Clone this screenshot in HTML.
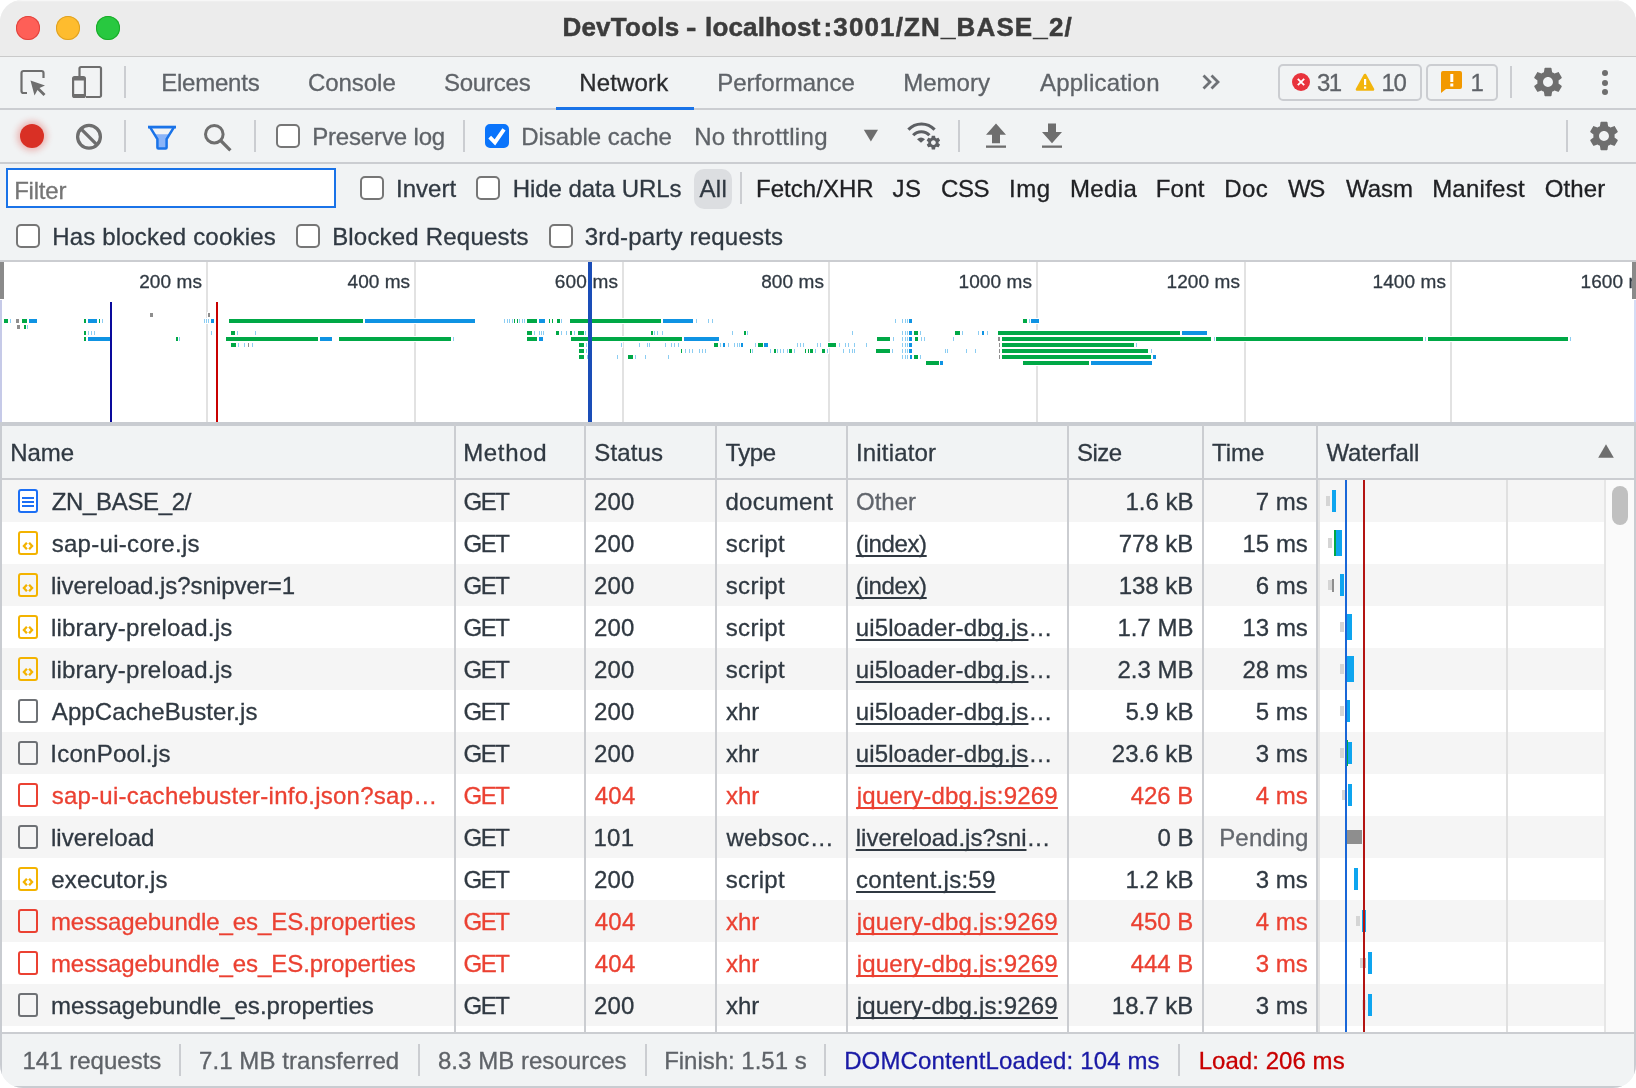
<!DOCTYPE html>
<html lang="en"><head><meta charset="utf-8"><title>DevTools - localhost:3001/ZN_BASE_2/</title>
<style>
html,body{margin:0;padding:0;background:#fff;}
body{width:1636px;height:1088px;overflow:hidden;position:relative;font-family:"Liberation Sans",sans-serif;font-size:24px;line-height:24px;}
#win{will-change:transform;position:absolute;left:0;top:0;width:1636px;height:1088px;border-radius:22px 22px 23px 23px;overflow:hidden;background:#f1f3f4;}
.t{position:absolute;white-space:nowrap;-webkit-text-stroke:0.3px currentColor;}
.r{position:absolute;}
svg{position:absolute;overflow:visible;}
.cb{position:absolute;width:20px;height:20px;border:2px solid #767676;border-radius:5px;background:#fff;}
</style></head><body><div id="win">

<div class="r" style="left:0px;top:0px;width:1636px;height:56px;background:#ececec;"></div>
<div class="r" style="left:0px;top:0px;width:1636px;height:1px;background:#f7f7f7;"></div>
<div class="r" style="left:0px;top:1px;width:1636px;height:1px;background:#efefef;"></div>
<div class="r" style="left:0px;top:56px;width:1636px;height:1px;background:#cacaca;"></div>
<div class="r" style="left:16px;top:16px;width:24px;height:24px;border-radius:50%;background:#fe5f57;box-shadow:inset 0 0 0 1px #e0443e;"></div>
<div class="r" style="left:56px;top:16px;width:24px;height:24px;border-radius:50%;background:#febc2e;box-shadow:inset 0 0 0 1px #dea123;"></div>
<div class="r" style="left:96px;top:16px;width:24px;height:24px;border-radius:50%;background:#28c840;box-shadow:inset 0 0 0 1px #1aab29;"></div>
<span class="t" style="left:562.40px;top:13.99px;color:#3c3c3c;font-size:26px;line-height:26px;font-weight:bold;-webkit-text-stroke-width:0.5px;"><span style="letter-spacing:0.249px;">DevTools</span> <span style="display:inline-block;margin-left:-0.40px;transform:scaleX(1.2);transform-origin:0 0;">-</span> <span style="letter-spacing:0.150px;margin-left:2.80px;">localhost</span><span style="letter-spacing:1.134px;margin-left:3.00px;">:3001/ZN_BASE_2/</span></span>
<div class="r" style="left:0px;top:57px;width:1636px;height:51px;background:#f1f3f4;"></div>
<div class="r" style="left:0px;top:108px;width:1636px;height:2px;background:#cbcdd1;"></div>
<svg style="left:18px;top:66px" width="32" height="32" viewBox="0 0 32 32"><path d="M9 27H5.5A2 2 0 0 1 3.500 25V7A2 2 0 0 1 5.500 5H23.500A2 2 0 0 1 25.500 7V12" fill="none" stroke="#6e6e6e" stroke-width="2.200"/><path d="M12.500 14.500L27 19.500L21.500 22L27.500 28L25.500 30L19.500 24L16.500 29.500Z" fill="#6e6e6e"/></svg>
<svg style="left:70px;top:64px" width="34" height="36" viewBox="0 0 34 36"><path d="M9.5 13V4.500A1.500 1.500 0 0 1 11 3H29.500A1.500 1.500 0 0 1 31 4.500V31.500A1.500 1.500 0 0 1 29.500 33H16" fill="none" stroke="#6e6e6e" stroke-width="2.200"/><rect x="3.100" y="13.100" width="11.800" height="19.800" rx="1.500" fill="none" stroke="#6e6e6e" stroke-width="2.200"/><rect x="3" y="13" width="12" height="3.500" fill="#6e6e6e"/><rect x="3" y="30" width="12" height="3" fill="#6e6e6e"/></svg>
<div class="r" style="left:124px;top:66px;width:2px;height:32px;background:#cbcdd1;"></div>
<span id="t1" class="t " style="top:70.68px;color:#5f6368;letter-spacing:-0.217px;left:161.13px;">Elements</span>
<span id="t2" class="t " style="top:70.68px;color:#5f6368;letter-spacing:-0.050px;left:307.98px;">Console</span>
<span id="t3" class="t " style="top:70.68px;color:#5f6368;letter-spacing:-0.213px;left:443.89px;">Sources</span>
<span id="t4" class="t " style="top:70.68px;color:#2b2c2e;letter-spacing:0.175px;left:579.13px;">Network</span>
<span id="t5" class="t " style="top:70.68px;color:#5f6368;letter-spacing:0.033px;left:717.13px;">Performance</span>
<span id="t6" class="t " style="top:70.68px;color:#5f6368;letter-spacing:0.026px;left:903.13px;">Memory</span>
<span id="t7" class="t " style="top:70.68px;color:#5f6368;letter-spacing:0.212px;left:1040.00px;">Application</span>
<div class="r" style="left:556px;top:107px;width:138px;height:3px;background:#1a73e8;"></div>
<svg style="left:1200px;top:72px" width="22" height="20" viewBox="0 0 22 20"><path d="M3.500 3.500L10 10L3.500 16.500M11.500 3.500L18 10L11.500 16.500" fill="none" stroke="#6e7176" stroke-width="2.800"/></svg>
<div class="r" style="left:1278px;top:64px;width:140px;height:33px;border:2px solid #cbcdd1;border-radius:5px;"></div>
<div class="r" style="left:1426px;top:64px;width:68px;height:33px;border:2px solid #cbcdd1;border-radius:5px;"></div>
<svg style="left:1291px;top:72px" width="20" height="20" viewBox="0 0 20 20"><circle cx="10" cy="10" r="9" fill="#e8333c"/><path d="M6.800 6.800L13.200 13.200M13.200 6.800L6.800 13.200" stroke="#fff" stroke-width="1.800"/></svg>
<span id="t8" class="t " style="top:70.68px;color:#5f6368;letter-spacing:-1.500px;left:1317.03px;">31</span>
<svg style="left:1355px;top:72px" width="20" height="20" viewBox="0 0 20 20"><path d="M10 3L18 17.500H2Z" fill="#f2b50c" stroke="#f2b50c" stroke-width="2.600" stroke-linejoin="round"/><rect x="9" y="7" width="2.200" height="6" fill="#fff"/><rect x="9" y="14.500" width="2.200" height="2.200" fill="#fff"/></svg>
<span id="t9" class="t " style="top:70.68px;color:#5f6368;letter-spacing:-1.345px;left:1381.57px;">10</span>
<svg style="left:1440px;top:70px" width="24" height="24" viewBox="0 0 24 24"><path d="M3 1H20A2 2 0 0 1 22 3V17A2 2 0 0 1 20 19H6L1 23V3A2 2 0 0 1 3 1Z" fill="#f29900"/><rect x="10.300" y="4" width="3" height="8" fill="#fff"/><rect x="10.300" y="13.500" width="3" height="3" fill="#fff"/></svg>
<span id="t10" class="t " style="top:70.68px;color:#5f6368;left:1470.57px;">1</span>
<div class="r" style="left:1510px;top:66px;width:2px;height:32px;background:#cbcdd1;"></div>
<svg style="left:1531px;top:65px" width="34" height="34" viewBox="0 0 24 24"><path fill="#6e6e6e" d="M19.430 12.980c.040-.320.070-.640.070-.980s-.030-.660-.070-.980l2.110-1.650c.190-.150.240-.420.120-.640l-2-3.460c-.120-.220-.390-.300-.610-.220l-2.490 1c-.520-.400-1.080-.730-1.690-.980l-.380-2.650C14.460 2.180 14.250 2 14 2h-4c-.250 0-.460.180-.490.420l-.380 2.650c-.610.250-1.170.590-1.690.980l-2.490-1c-.230-.090-.490 0-.610.220l-2 3.460c-.130.220-.070.490.120.640l2.110 1.650c-.040.320-.070.650-.070.980s.030.660.070.980l-2.110 1.650c-.190.150-.240.420-.120.640l2 3.460c.120.220.390.300.610.220l2.490-1c.520.400 1.080.730 1.690.980l.380 2.650c.030.240.240.420.490.420h4c.250 0 .460-.180.490-.420l.380-2.650c.610-.250 1.170-.590 1.690-.980l2.490 1c.230.090.490 0 .610-.220l2-3.460c.120-.220.070-.490-.120-.640l-2.110-1.650zM12 15.500c-1.930 0-3.500-1.570-3.500-3.500s1.570-3.500 3.500-3.500 3.500 1.570 3.500 3.500-1.570 3.500-3.500 3.500z"/></svg>
<div class="r" style="left:1602px;top:70px;width:6px;height:6px;border-radius:50%;background:#6e6e6e;"></div>
<div class="r" style="left:1602px;top:79.5px;width:6px;height:6px;border-radius:50%;background:#6e6e6e;"></div>
<div class="r" style="left:1602px;top:89px;width:6px;height:6px;border-radius:50%;background:#6e6e6e;"></div>
<div class="r" style="left:0px;top:162px;width:1636px;height:2px;background:#cbcdd1;"></div>
<div class="r" style="left:20px;top:124px;width:24px;height:24px;border-radius:50%;background:#d93025;box-shadow:0 0 6px 3px rgba(217,48,37,0.300);"></div>
<svg style="left:0px;top:0px" width="120" height="160" viewBox="0 0 120 160"><circle cx="89" cy="136.800" r="11.400" fill="none" stroke="#6e6e6e" stroke-width="3.300"/><path d="M81 128.800L97 144.800" stroke="#6e6e6e" stroke-width="3.300"/></svg>
<div class="r" style="left:124px;top:120px;width:2px;height:32px;background:#cbcdd1;"></div>
<svg style="left:0px;top:0px" width="200" height="160" viewBox="0 0 200 160"><path d="M153.800 134.200H170.200L166.700 139.500V148.600H157.300V139.500Z" fill="#8ab4f8"/><path d="M150.300 127.600L157.400 139.200V147.500Q157.400 148.500 158.400 148.500H165.600Q166.600 148.500 166.600 147.500V139.200L173.700 127.600" fill="none" stroke="#1a73e8" stroke-width="2.500" stroke-linejoin="miter"/><rect x="148" y="125.700" width="28" height="2.800" fill="#1a73e8"/></svg>
<svg style="left:0px;top:0px" width="240" height="160" viewBox="0 0 240 160"><circle cx="214.300" cy="134.200" r="8.800" fill="none" stroke="#6e6e6e" stroke-width="3"/><path d="M220.600 140.500L230.400 150.300" stroke="#6e6e6e" stroke-width="3.200"/></svg>
<div class="r" style="left:254px;top:120px;width:2px;height:32px;background:#cbcdd1;"></div>
<div class="cb" style="left:276px;top:124px;"></div>
<span id="t11" class="t " style="top:124.68px;color:#5f6368;letter-spacing:-0.152px;left:312.13px;">Preserve log</span>
<div class="r" style="left:463px;top:120px;width:2px;height:32px;background:#cbcdd1;"></div>
<div class="cb" style="left:485px;top:124px;border-color:#0a74fb;background:#0a74fb;"></div><svg style="left:485px;top:124px" width="24" height="24" viewBox="0 0 24 24"><path d="M4.700 13.200L9.900 18.400L19 5.300" fill="none" stroke="#fff" stroke-width="3.900"/></svg>
<span id="t12" class="t " style="top:124.68px;color:#5f6368;letter-spacing:-0.000px;left:521.13px;">Disable cache</span>
<span id="t13" class="t " style="top:124.68px;color:#5f6368;letter-spacing:0.333px;left:694.13px;">No throttling</span>
<svg style="left:863px;top:129.300px" width="16" height="13" viewBox="0 0 16 13"><path d="M0.800 0.700H15L7.900 12.500Z" fill="#6e6e6e"/></svg>
<svg style="left:0px;top:0px" width="960" height="160" viewBox="0 0 960 160"><path d="M908.400 129.600A18.100 18.100 0 0 1 934.600 129.600" fill="none" stroke="#5c5f63" stroke-width="3.100"/><path d="M913.200 135.300A10.900 10.900 0 0 1 929.400 135.300" fill="none" stroke="#5c5f63" stroke-width="3.100"/><path d="M917 139.200Q921 136 925 139.200L921 142.800Z" fill="#5c5f63"/><circle cx="933.400" cy="142.600" r="7.600" fill="#f1f3f4"/><g transform="translate(925.200 134.400) scale(0.683)"><path fill="#5c5f63" d="M19.430 12.980c.040-.320.070-.640.070-.980s-.030-.660-.070-.980l2.110-1.650c.190-.150.240-.420.120-.640l-2-3.460c-.120-.220-.390-.300-.610-.220l-2.490 1c-.520-.400-1.080-.730-1.690-.980l-.380-2.650C14.460 2.180 14.250 2 14 2h-4c-.250 0-.460.180-.490.420l-.380 2.650c-.610.250-1.170.590-1.690.980l-2.490-1c-.230-.090-.490 0-.610.220l-2 3.460c-.130.220-.070.490.120.640l2.110 1.650c-.040.320-.070.650-.070.980s.030.660.070.980l-2.110 1.650c-.190.150-.240.420-.120.640l2 3.460c.120.220.390.300.610.220l2.490-1c.520.400 1.080.730 1.690.980l.380 2.650c.030.240.240.420.490.420h4c.250 0 .460-.180.490-.420l.380-2.650c.610-.250 1.170-.590 1.690-.980l2.490 1c.230.090.490 0 .610-.220l2-3.460c.120-.220.070-.490-.120-.640l-2.110-1.650zM12 15.500c-1.930 0-3.500-1.570-3.500-3.500s1.570-3.500 3.500-3.500 3.500 1.570 3.500 3.500-1.570 3.500-3.500 3.500z"/></g></svg>
<div class="r" style="left:958px;top:120px;width:2px;height:32px;background:#cbcdd1;"></div>
<svg style="left:984px;top:122.400px" width="24" height="28" viewBox="0 0 24 28"><path d="M12 1.500L22 12.800H16V21.300H8V12.800H2Z" fill="#6e6e6e"/><rect x="2" y="23.500" width="20" height="2.300" fill="#6e6e6e"/></svg>
<svg style="left:1040px;top:122.400px" width="24" height="28" viewBox="0 0 24 28"><path d="M12 21.300L22 10H16V1.500H8V10H2Z" fill="#6e6e6e"/><rect x="2" y="23.500" width="20" height="2.300" fill="#6e6e6e"/></svg>
<div class="r" style="left:1566px;top:120px;width:2px;height:32px;background:#cbcdd1;"></div>
<svg style="left:1587px;top:119px" width="34" height="34" viewBox="0 0 24 24"><path fill="#6e6e6e" d="M19.430 12.980c.040-.320.070-.640.070-.980s-.030-.660-.070-.980l2.110-1.650c.190-.150.240-.420.120-.640l-2-3.460c-.120-.220-.390-.300-.610-.220l-2.490 1c-.520-.400-1.080-.730-1.690-.980l-.380-2.650C14.460 2.180 14.250 2 14 2h-4c-.250 0-.460.180-.490.420l-.380 2.650c-.610.250-1.170.590-1.690.980l-2.490-1c-.230-.090-.490 0-.610.220l-2 3.460c-.130.220-.070.490.120.640l2.110 1.650c-.040.320-.070.650-.070.980s.030.660.070.980l-2.110 1.650c-.190.150-.240.420-.120.640l2 3.460c.120.220.390.300.610.220l2.490-1c.520.400 1.080.730 1.690.980l.380 2.650c.030.240.240.420.490.420h4c.250 0 .460-.180.490-.420l.380-2.650c.610-.250 1.170-.590 1.690-.980l2.490 1c.230.090.490 0 .610-.220l2-3.460c.120-.220.070-.490-.120-.640l-2.110-1.650zM12 15.500c-1.930 0-3.500-1.570-3.500-3.500s1.570-3.500 3.500-3.500 3.500 1.570 3.500 3.500-1.570 3.500-3.500 3.500z"/></svg>
<div class="r" style="left:6px;top:168px;width:326px;height:36px;border:2px solid #1a73e8;background:#fff;"></div>
<span id="t14" class="t " style="top:178.68px;color:#757575;letter-spacing:-0.205px;left:14.13px;">Filter</span>
<div class="cb" style="left:360.200px;top:176px;"></div>
<span id="t15" class="t " style="top:176.68px;color:#303942;letter-spacing:0.064px;left:395.92px;">Invert</span>
<div class="cb" style="left:476.200px;top:176px;"></div>
<span id="t16" class="t " style="top:176.68px;color:#303942;letter-spacing:-0.037px;left:512.63px;">Hide data URLs</span>
<div class="r" style="left:694px;top:168.500px;width:38px;height:40.500px;border-radius:10px;background:#dcdee1;"></div>
<span id="t17" class="t " style="top:176.68px;color:#303942;letter-spacing:0.345px;left:699.50px;">All</span>
<div class="r" style="left:740px;top:172px;width:2px;height:32px;background:#cbcdd1;"></div>
<span id="t18" class="t " style="top:176.68px;color:#202124;letter-spacing:0.028px;left:756.03px;">Fetch/XHR</span>
<span id="t19" class="t " style="top:176.68px;color:#202124;letter-spacing:0.557px;left:892.55px;">JS</span>
<span id="t20" class="t " style="top:176.68px;color:#202124;letter-spacing:-0.386px;left:940.98px;">CSS</span>
<span id="t21" class="t " style="top:176.68px;color:#202124;letter-spacing:0.570px;left:1009.02px;">Img</span>
<span id="t22" class="t " style="top:176.68px;color:#202124;letter-spacing:0.364px;left:1070.03px;">Media</span>
<span id="t23" class="t " style="top:176.68px;color:#202124;letter-spacing:0.235px;left:1155.73px;">Font</span>
<span id="t24" class="t " style="top:176.68px;color:#202124;letter-spacing:0.523px;left:1224.13px;">Doc</span>
<span id="t25" class="t " style="top:176.68px;color:#202124;letter-spacing:-1.500px;left:1288.10px;">WS</span>
<span id="t26" class="t " style="top:176.68px;color:#202124;letter-spacing:-0.049px;left:1346.10px;">Wasm</span>
<span id="t27" class="t " style="top:176.68px;color:#202124;letter-spacing:0.246px;left:1432.13px;">Manifest</span>
<span id="t28" class="t " style="top:176.68px;color:#202124;letter-spacing:0.124px;left:1544.72px;">Other</span>
<div class="cb" style="left:16.2px;top:224px;"></div>
<span id="t29" class="t " style="top:224.68px;color:#303942;letter-spacing:0.193px;left:52.13px;">Has blocked cookies</span>
<div class="cb" style="left:296.2px;top:224px;"></div>
<span id="t30" class="t " style="top:224.68px;color:#303942;letter-spacing:0.201px;left:332.13px;">Blocked Requests</span>
<div class="cb" style="left:549.2px;top:224px;"></div>
<span id="t31" class="t " style="top:224.68px;color:#303942;letter-spacing:0.216px;left:584.63px;">3rd-party requests</span>
<div class="r" style="left:0px;top:260px;width:1636px;height:2px;background:#cbcdd1;"></div>
<div class="r" style="left:0px;top:262px;width:1636px;height:160px;background:#fff;"></div>
<div class="r" style="left:0px;top:422px;width:1636px;height:4px;background:#c9ccd1;"></div>
<div class="r" style="left:206px;top:262px;width:2px;height:160px;background:#e2e2e2;"></div>
<div class="r" style="left:414px;top:262px;width:2px;height:160px;background:#e2e2e2;"></div>
<div class="r" style="left:622px;top:262px;width:2px;height:160px;background:#e2e2e2;"></div>
<div class="r" style="left:828px;top:262px;width:2px;height:160px;background:#e2e2e2;"></div>
<div class="r" style="left:1036px;top:262px;width:2px;height:160px;background:#e2e2e2;"></div>
<div class="r" style="left:1244px;top:262px;width:2px;height:160px;background:#e2e2e2;"></div>
<div class="r" style="left:1450px;top:262px;width:2px;height:160px;background:#e2e2e2;"></div>
<svg style="left:0;top:0" width="1636" height="1088" viewBox="0 0 1636 1088" shape-rendering="crispEdges"><rect x="149.4" y="312" width="5.0" height="6" fill="#fff"/><rect x="150.4" y="313" width="3.0" height="4" fill="#8e8e8e"/><rect x="207.0" y="312" width="3.5" height="6" fill="#fff"/><rect x="208.0" y="313" width="1.5" height="4" fill="#8e8e8e"/><rect x="3.4" y="318" width="5.6" height="6" fill="#fff"/><rect x="4.4" y="319" width="3.6" height="4" fill="#00a846"/><rect x="9.0" y="318" width="3.2" height="6" fill="#fff"/><rect x="10.0" y="319" width="1.2" height="4" fill="#8ccdf2"/><rect x="15.0" y="318" width="5.0" height="6" fill="#fff"/><rect x="16.0" y="319" width="3.0" height="4" fill="#8e8e8e"/><rect x="21.0" y="318" width="7.0" height="6" fill="#fff"/><rect x="22.0" y="319" width="5.0" height="4" fill="#00a846"/><rect x="28.0" y="318" width="10.0" height="6" fill="#fff"/><rect x="29.0" y="319" width="8.0" height="4" fill="#0f93e3"/><rect x="83.4" y="318" width="3.6" height="6" fill="#fff"/><rect x="84.4" y="319" width="1.6" height="4" fill="#00a846"/><rect x="87.0" y="318" width="11.0" height="6" fill="#fff"/><rect x="88.0" y="319" width="9.0" height="4" fill="#0f93e3"/><rect x="97.5" y="318" width="3.5" height="6" fill="#fff"/><rect x="98.5" y="319" width="1.5" height="4" fill="#00a846"/><rect x="101.0" y="318" width="3.2" height="6" fill="#fff"/><rect x="102.0" y="319" width="1.2" height="4" fill="#8ccdf2"/><rect x="202.5" y="318" width="3.2" height="6" fill="#fff"/><rect x="203.5" y="319" width="1.2" height="4" fill="#8ccdf2"/><rect x="204.5" y="318" width="3.2" height="6" fill="#fff"/><rect x="205.5" y="319" width="1.2" height="4" fill="#8ccdf2"/><rect x="206.5" y="318" width="3.2" height="6" fill="#fff"/><rect x="207.5" y="319" width="1.2" height="4" fill="#8ccdf2"/><rect x="208.5" y="318" width="3.2" height="6" fill="#fff"/><rect x="209.5" y="319" width="1.2" height="4" fill="#8ccdf2"/><rect x="210.0" y="318" width="4.5" height="6" fill="#fff"/><rect x="211.0" y="319" width="2.5" height="4" fill="#0f93e3"/><rect x="227.8" y="318" width="136.0" height="6" fill="#fff"/><rect x="228.8" y="319" width="134.0" height="4" fill="#00a846"/><rect x="363.7" y="318" width="111.8" height="6" fill="#fff"/><rect x="364.7" y="319" width="109.8" height="4" fill="#0f93e3"/><rect x="503.0" y="318" width="3.2" height="6" fill="#fff"/><rect x="504.0" y="319" width="1.2" height="4" fill="#8ccdf2"/><rect x="505.5" y="318" width="3.2" height="6" fill="#fff"/><rect x="506.5" y="319" width="1.2" height="4" fill="#8ccdf2"/><rect x="508.0" y="318" width="3.2" height="6" fill="#fff"/><rect x="509.0" y="319" width="1.2" height="4" fill="#8ccdf2"/><rect x="511.0" y="318" width="3.2" height="6" fill="#fff"/><rect x="512.0" y="319" width="1.2" height="4" fill="#8ccdf2"/><rect x="517.5" y="318" width="3.2" height="6" fill="#fff"/><rect x="518.5" y="319" width="1.2" height="4" fill="#8ccdf2"/><rect x="520.5" y="318" width="3.2" height="6" fill="#fff"/><rect x="521.5" y="319" width="1.2" height="4" fill="#8ccdf2"/><rect x="523.0" y="318" width="3.2" height="6" fill="#fff"/><rect x="524.0" y="319" width="1.2" height="4" fill="#8ccdf2"/><rect x="513.0" y="318" width="3.2" height="6" fill="#fff"/><rect x="514.0" y="319" width="1.2" height="4" fill="#00a846"/><rect x="515.5" y="318" width="3.2" height="6" fill="#fff"/><rect x="516.5" y="319" width="1.2" height="4" fill="#00a846"/><rect x="525.8" y="318" width="12.4" height="6" fill="#fff"/><rect x="526.8" y="319" width="10.4" height="4" fill="#00a846"/><rect x="537.7" y="318" width="8.0" height="6" fill="#fff"/><rect x="538.7" y="319" width="6.0" height="4" fill="#0f93e3"/><rect x="548.0" y="318" width="3.2" height="6" fill="#fff"/><rect x="549.0" y="319" width="1.2" height="4" fill="#00a846"/><rect x="551.0" y="318" width="3.2" height="6" fill="#fff"/><rect x="552.0" y="319" width="1.2" height="4" fill="#00a846"/><rect x="556.0" y="318" width="4.5" height="6" fill="#fff"/><rect x="557.0" y="319" width="2.5" height="4" fill="#00a846"/><rect x="560.0" y="318" width="3.2" height="6" fill="#fff"/><rect x="561.0" y="319" width="1.2" height="4" fill="#8ccdf2"/><rect x="568.9" y="318" width="93.3" height="6" fill="#fff"/><rect x="569.9" y="319" width="91.3" height="4" fill="#00a846"/><rect x="661.8" y="318" width="32.5" height="6" fill="#fff"/><rect x="662.8" y="319" width="30.5" height="4" fill="#0f93e3"/><rect x="694.5" y="318" width="3.2" height="6" fill="#fff"/><rect x="695.5" y="319" width="1.2" height="4" fill="#8ccdf2"/><rect x="707.0" y="318" width="3.2" height="6" fill="#fff"/><rect x="708.0" y="319" width="1.2" height="4" fill="#8ccdf2"/><rect x="710.5" y="318" width="3.2" height="6" fill="#fff"/><rect x="711.5" y="319" width="1.2" height="4" fill="#8ccdf2"/><rect x="893.8" y="318" width="3.2" height="6" fill="#fff"/><rect x="894.8" y="319" width="1.2" height="4" fill="#8ccdf2"/><rect x="901.0" y="318" width="3.2" height="6" fill="#fff"/><rect x="902.0" y="319" width="1.2" height="4" fill="#8ccdf2"/><rect x="903.5" y="318" width="3.2" height="6" fill="#fff"/><rect x="904.5" y="319" width="1.2" height="4" fill="#8ccdf2"/><rect x="906.0" y="318" width="3.2" height="6" fill="#fff"/><rect x="907.0" y="319" width="1.2" height="4" fill="#8ccdf2"/><rect x="908.0" y="318" width="5.2" height="6" fill="#fff"/><rect x="909.0" y="319" width="3.2" height="4" fill="#0f93e3"/><rect x="1022.2" y="318" width="5.8" height="6" fill="#fff"/><rect x="1023.2" y="319" width="3.8" height="4" fill="#00a846"/><rect x="1028.0" y="318" width="3.2" height="6" fill="#fff"/><rect x="1029.0" y="319" width="1.2" height="4" fill="#8ccdf2"/><rect x="1030.0" y="318" width="9.5" height="6" fill="#fff"/><rect x="1031.0" y="319" width="7.5" height="4" fill="#0f93e3"/><rect x="15.5" y="324" width="5.5" height="6" fill="#fff"/><rect x="16.5" y="325" width="3.5" height="4" fill="#8e8e8e"/><rect x="23.0" y="324" width="3.5" height="6" fill="#fff"/><rect x="24.0" y="325" width="1.5" height="4" fill="#00a846"/><rect x="26.0" y="324" width="3.2" height="6" fill="#fff"/><rect x="27.0" y="325" width="1.2" height="4" fill="#8ccdf2"/><rect x="83.4" y="330" width="3.6" height="6" fill="#fff"/><rect x="84.4" y="331" width="1.6" height="4" fill="#00a846"/><rect x="87.0" y="330" width="3.2" height="6" fill="#fff"/><rect x="88.0" y="331" width="1.2" height="4" fill="#8ccdf2"/><rect x="89.8" y="330" width="3.2" height="6" fill="#fff"/><rect x="90.8" y="331" width="1.2" height="4" fill="#8ccdf2"/><rect x="92.5" y="330" width="3.2" height="6" fill="#fff"/><rect x="93.5" y="331" width="1.2" height="4" fill="#8ccdf2"/><rect x="210.0" y="330" width="3.2" height="6" fill="#fff"/><rect x="211.0" y="331" width="1.2" height="4" fill="#8ccdf2"/><rect x="229.5" y="330" width="6.0" height="6" fill="#fff"/><rect x="230.5" y="331" width="4.0" height="4" fill="#00a846"/><rect x="235.5" y="330" width="3.2" height="6" fill="#fff"/><rect x="236.5" y="331" width="1.2" height="4" fill="#8ccdf2"/><rect x="254.0" y="330" width="3.2" height="6" fill="#fff"/><rect x="255.0" y="331" width="1.2" height="4" fill="#8ccdf2"/><rect x="525.8" y="330" width="7.2" height="6" fill="#fff"/><rect x="526.8" y="331" width="5.2" height="4" fill="#00a846"/><rect x="533.0" y="330" width="3.2" height="6" fill="#fff"/><rect x="534.0" y="331" width="1.2" height="4" fill="#8ccdf2"/><rect x="537.5" y="330" width="3.2" height="6" fill="#fff"/><rect x="538.5" y="331" width="1.2" height="4" fill="#8ccdf2"/><rect x="540.0" y="330" width="3.2" height="6" fill="#fff"/><rect x="541.0" y="331" width="1.2" height="4" fill="#8ccdf2"/><rect x="542.0" y="330" width="3.2" height="6" fill="#fff"/><rect x="543.0" y="331" width="1.2" height="4" fill="#8ccdf2"/><rect x="555.0" y="330" width="5.0" height="6" fill="#fff"/><rect x="556.0" y="331" width="3.0" height="4" fill="#00a846"/><rect x="560.0" y="330" width="3.2" height="6" fill="#fff"/><rect x="561.0" y="331" width="1.2" height="4" fill="#8ccdf2"/><rect x="565.0" y="330" width="3.2" height="6" fill="#fff"/><rect x="566.0" y="331" width="1.2" height="4" fill="#8ccdf2"/><rect x="568.5" y="330" width="4.5" height="6" fill="#fff"/><rect x="569.5" y="331" width="2.5" height="4" fill="#00a846"/><rect x="573.0" y="330" width="3.2" height="6" fill="#fff"/><rect x="574.0" y="331" width="1.2" height="4" fill="#8ccdf2"/><rect x="577.0" y="330" width="7.5" height="6" fill="#fff"/><rect x="578.0" y="331" width="5.5" height="4" fill="#00a846"/><rect x="584.0" y="330" width="3.2" height="6" fill="#fff"/><rect x="585.0" y="331" width="1.2" height="4" fill="#8ccdf2"/><rect x="588.0" y="330" width="3.2" height="6" fill="#fff"/><rect x="589.0" y="331" width="1.2" height="4" fill="#8ccdf2"/><rect x="650.0" y="330" width="4.0" height="6" fill="#fff"/><rect x="651.0" y="331" width="2.0" height="4" fill="#00a846"/><rect x="653.0" y="330" width="3.2" height="6" fill="#fff"/><rect x="654.0" y="331" width="1.2" height="4" fill="#8ccdf2"/><rect x="656.0" y="330" width="3.2" height="6" fill="#fff"/><rect x="657.0" y="331" width="1.2" height="4" fill="#8ccdf2"/><rect x="660.5" y="330" width="3.2" height="6" fill="#fff"/><rect x="661.5" y="331" width="1.2" height="4" fill="#8ccdf2"/><rect x="730.5" y="330" width="3.2" height="6" fill="#fff"/><rect x="731.5" y="331" width="1.2" height="4" fill="#8ccdf2"/><rect x="743.0" y="330" width="3.5" height="6" fill="#fff"/><rect x="744.0" y="331" width="1.5" height="4" fill="#00a846"/><rect x="746.0" y="330" width="3.2" height="6" fill="#fff"/><rect x="747.0" y="331" width="1.2" height="4" fill="#8ccdf2"/><rect x="851.0" y="330" width="3.2" height="6" fill="#fff"/><rect x="852.0" y="331" width="1.2" height="4" fill="#8ccdf2"/><rect x="901.0" y="330" width="3.2" height="6" fill="#fff"/><rect x="902.0" y="331" width="1.2" height="4" fill="#8ccdf2"/><rect x="903.5" y="330" width="3.2" height="6" fill="#fff"/><rect x="904.5" y="331" width="1.2" height="4" fill="#8ccdf2"/><rect x="906.0" y="330" width="3.2" height="6" fill="#fff"/><rect x="907.0" y="331" width="1.2" height="4" fill="#8ccdf2"/><rect x="908.0" y="330" width="5.0" height="6" fill="#fff"/><rect x="909.0" y="331" width="3.0" height="4" fill="#0f93e3"/><rect x="913.0" y="330" width="5.5" height="6" fill="#fff"/><rect x="914.0" y="331" width="3.5" height="4" fill="#00a846"/><rect x="918.5" y="330" width="3.2" height="6" fill="#fff"/><rect x="919.5" y="331" width="1.2" height="4" fill="#8ccdf2"/><rect x="954.0" y="330" width="7.0" height="6" fill="#fff"/><rect x="955.0" y="331" width="5.0" height="4" fill="#00a846"/><rect x="961.0" y="330" width="3.2" height="6" fill="#fff"/><rect x="962.0" y="331" width="1.2" height="4" fill="#8ccdf2"/><rect x="976.5" y="330" width="3.2" height="6" fill="#fff"/><rect x="977.5" y="331" width="1.2" height="4" fill="#8ccdf2"/><rect x="985.5" y="330" width="3.2" height="6" fill="#fff"/><rect x="986.5" y="331" width="1.2" height="4" fill="#8ccdf2"/><rect x="980.5" y="330" width="4.5" height="6" fill="#fff"/><rect x="981.5" y="331" width="2.5" height="4" fill="#0f93e3"/><rect x="996.9" y="330" width="184.5" height="6" fill="#fff"/><rect x="997.9" y="331" width="182.5" height="4" fill="#00a846"/><rect x="1181.3" y="330" width="26.7" height="6" fill="#fff"/><rect x="1182.3" y="331" width="24.7" height="4" fill="#0f93e3"/><rect x="83.4" y="336" width="3.6" height="6" fill="#fff"/><rect x="84.4" y="337" width="1.6" height="4" fill="#00a846"/><rect x="87.0" y="336" width="26.0" height="6" fill="#fff"/><rect x="88.0" y="337" width="24.0" height="4" fill="#0f93e3"/><rect x="175.0" y="336" width="3.5" height="6" fill="#fff"/><rect x="176.0" y="337" width="1.5" height="4" fill="#00a846"/><rect x="178.0" y="336" width="3.2" height="6" fill="#fff"/><rect x="179.0" y="337" width="1.2" height="4" fill="#8ccdf2"/><rect x="225.0" y="336" width="93.7" height="6" fill="#fff"/><rect x="226.0" y="337" width="91.7" height="4" fill="#00a846"/><rect x="318.7" y="336" width="14.0" height="6" fill="#fff"/><rect x="319.7" y="337" width="12.0" height="4" fill="#0f93e3"/><rect x="338.0" y="336" width="113.8" height="6" fill="#fff"/><rect x="339.0" y="337" width="111.8" height="4" fill="#00a846"/><rect x="451.5" y="336" width="3.2" height="6" fill="#fff"/><rect x="452.5" y="337" width="1.2" height="4" fill="#8ccdf2"/><rect x="525.8" y="336" width="12.2" height="6" fill="#fff"/><rect x="526.8" y="337" width="10.2" height="4" fill="#00a846"/><rect x="537.7" y="336" width="6.3" height="6" fill="#fff"/><rect x="538.7" y="337" width="4.3" height="4" fill="#0f93e3"/><rect x="569.8" y="336" width="113.5" height="6" fill="#fff"/><rect x="570.8" y="337" width="111.5" height="4" fill="#00a846"/><rect x="683.1" y="336" width="37.2" height="6" fill="#fff"/><rect x="684.1" y="337" width="35.2" height="4" fill="#0f93e3"/><rect x="876.0" y="336" width="15.0" height="6" fill="#fff"/><rect x="877.0" y="337" width="13.0" height="4" fill="#00a846"/><rect x="891.5" y="336" width="3.2" height="6" fill="#fff"/><rect x="892.5" y="337" width="1.2" height="4" fill="#8ccdf2"/><rect x="901.0" y="336" width="3.2" height="6" fill="#fff"/><rect x="902.0" y="337" width="1.2" height="4" fill="#8ccdf2"/><rect x="903.5" y="336" width="3.2" height="6" fill="#fff"/><rect x="904.5" y="337" width="1.2" height="4" fill="#8ccdf2"/><rect x="906.0" y="336" width="3.2" height="6" fill="#fff"/><rect x="907.0" y="337" width="1.2" height="4" fill="#8ccdf2"/><rect x="908.0" y="336" width="5.0" height="6" fill="#fff"/><rect x="909.0" y="337" width="3.0" height="4" fill="#0f93e3"/><rect x="913.5" y="336" width="5.5" height="6" fill="#fff"/><rect x="914.5" y="337" width="3.5" height="4" fill="#00a846"/><rect x="919.5" y="336" width="3.2" height="6" fill="#fff"/><rect x="920.5" y="337" width="1.2" height="4" fill="#8ccdf2"/><rect x="922.5" y="336" width="3.2" height="6" fill="#fff"/><rect x="923.5" y="337" width="1.2" height="4" fill="#8ccdf2"/><rect x="952.0" y="336" width="3.2" height="6" fill="#fff"/><rect x="953.0" y="337" width="1.2" height="4" fill="#8ccdf2"/><rect x="997.0" y="336" width="4.0" height="6" fill="#fff"/><rect x="998.0" y="337" width="2.0" height="4" fill="#8e8e8e"/><rect x="1000.8" y="336" width="211.6" height="6" fill="#fff"/><rect x="1001.8" y="337" width="209.6" height="4" fill="#00a846"/><rect x="1212.5" y="336" width="3.2" height="6" fill="#fff"/><rect x="1213.5" y="337" width="1.2" height="4" fill="#8ccdf2"/><rect x="1215.0" y="336" width="209.0" height="6" fill="#fff"/><rect x="1216.0" y="337" width="207.0" height="4" fill="#00a846"/><rect x="1424.0" y="336" width="3.2" height="6" fill="#fff"/><rect x="1425.0" y="337" width="1.2" height="4" fill="#8ccdf2"/><rect x="1427.0" y="336" width="142.0" height="6" fill="#fff"/><rect x="1428.0" y="337" width="140.0" height="4" fill="#00a846"/><rect x="1569.0" y="336" width="3.2" height="6" fill="#fff"/><rect x="1570.0" y="337" width="1.2" height="4" fill="#8ccdf2"/><rect x="229.5" y="342" width="7.0" height="6" fill="#fff"/><rect x="230.5" y="343" width="5.0" height="4" fill="#00a846"/><rect x="236.5" y="342" width="3.2" height="6" fill="#fff"/><rect x="237.5" y="343" width="1.2" height="4" fill="#8ccdf2"/><rect x="243.0" y="342" width="3.2" height="6" fill="#fff"/><rect x="244.0" y="343" width="1.2" height="4" fill="#8ccdf2"/><rect x="250.5" y="342" width="3.2" height="6" fill="#fff"/><rect x="251.5" y="343" width="1.2" height="4" fill="#8ccdf2"/><rect x="246.5" y="342" width="3.2" height="6" fill="#fff"/><rect x="247.5" y="343" width="1.2" height="4" fill="#8e8e8e"/><rect x="577.5" y="342" width="7.5" height="6" fill="#fff"/><rect x="578.5" y="343" width="5.5" height="4" fill="#00a846"/><rect x="585.0" y="342" width="3.2" height="6" fill="#fff"/><rect x="586.0" y="343" width="1.2" height="4" fill="#8ccdf2"/><rect x="619.5" y="342" width="3.2" height="6" fill="#fff"/><rect x="620.5" y="343" width="1.2" height="4" fill="#8ccdf2"/><rect x="637.5" y="342" width="3.2" height="6" fill="#fff"/><rect x="638.5" y="343" width="1.2" height="4" fill="#8ccdf2"/><rect x="645.5" y="342" width="3.2" height="6" fill="#fff"/><rect x="646.5" y="343" width="1.2" height="4" fill="#8ccdf2"/><rect x="647.5" y="342" width="3.2" height="6" fill="#fff"/><rect x="648.5" y="343" width="1.2" height="4" fill="#8ccdf2"/><rect x="664.0" y="342" width="3.2" height="6" fill="#fff"/><rect x="665.0" y="343" width="1.2" height="4" fill="#8ccdf2"/><rect x="670.0" y="342" width="3.2" height="6" fill="#fff"/><rect x="671.0" y="343" width="1.2" height="4" fill="#8ccdf2"/><rect x="673.0" y="342" width="3.2" height="6" fill="#fff"/><rect x="674.0" y="343" width="1.2" height="4" fill="#8ccdf2"/><rect x="675.5" y="342" width="3.2" height="6" fill="#fff"/><rect x="676.5" y="343" width="1.2" height="4" fill="#8ccdf2"/><rect x="677.0" y="342" width="3.2" height="6" fill="#fff"/><rect x="678.0" y="343" width="1.2" height="4" fill="#8ccdf2"/><rect x="713.0" y="342" width="5.5" height="6" fill="#fff"/><rect x="714.0" y="343" width="3.5" height="4" fill="#00a846"/><rect x="718.5" y="342" width="3.2" height="6" fill="#fff"/><rect x="719.5" y="343" width="1.2" height="4" fill="#8ccdf2"/><rect x="721.5" y="342" width="4.5" height="6" fill="#fff"/><rect x="722.5" y="343" width="2.5" height="4" fill="#0f93e3"/><rect x="727.0" y="342" width="3.2" height="6" fill="#fff"/><rect x="728.0" y="343" width="1.2" height="4" fill="#8ccdf2"/><rect x="733.0" y="342" width="3.2" height="6" fill="#fff"/><rect x="734.0" y="343" width="1.2" height="4" fill="#8ccdf2"/><rect x="736.0" y="342" width="3.2" height="6" fill="#fff"/><rect x="737.0" y="343" width="1.2" height="4" fill="#8ccdf2"/><rect x="738.0" y="342" width="3.2" height="6" fill="#fff"/><rect x="739.0" y="343" width="1.2" height="4" fill="#8ccdf2"/><rect x="740.0" y="342" width="3.5" height="6" fill="#fff"/><rect x="741.0" y="343" width="1.5" height="4" fill="#0f93e3"/><rect x="754.0" y="342" width="3.2" height="6" fill="#fff"/><rect x="755.0" y="343" width="1.2" height="4" fill="#8ccdf2"/><rect x="757.0" y="342" width="7.0" height="6" fill="#fff"/><rect x="758.0" y="343" width="5.0" height="4" fill="#00a846"/><rect x="763.0" y="342" width="5.5" height="6" fill="#fff"/><rect x="764.0" y="343" width="3.5" height="4" fill="#0f93e3"/><rect x="796.0" y="342" width="3.2" height="6" fill="#fff"/><rect x="797.0" y="343" width="1.2" height="4" fill="#8ccdf2"/><rect x="799.0" y="342" width="3.2" height="6" fill="#fff"/><rect x="800.0" y="343" width="1.2" height="4" fill="#8ccdf2"/><rect x="802.0" y="342" width="3.2" height="6" fill="#fff"/><rect x="803.0" y="343" width="1.2" height="4" fill="#8ccdf2"/><rect x="816.0" y="342" width="3.2" height="6" fill="#fff"/><rect x="817.0" y="343" width="1.2" height="4" fill="#8ccdf2"/><rect x="819.0" y="342" width="3.2" height="6" fill="#fff"/><rect x="820.0" y="343" width="1.2" height="4" fill="#8ccdf2"/><rect x="827.0" y="342" width="10.0" height="6" fill="#fff"/><rect x="828.0" y="343" width="8.0" height="4" fill="#00a846"/><rect x="837.5" y="342" width="3.2" height="6" fill="#fff"/><rect x="838.5" y="343" width="1.2" height="4" fill="#8ccdf2"/><rect x="844.0" y="342" width="3.2" height="6" fill="#fff"/><rect x="845.0" y="343" width="1.2" height="4" fill="#8ccdf2"/><rect x="846.5" y="342" width="3.2" height="6" fill="#fff"/><rect x="847.5" y="343" width="1.2" height="4" fill="#8ccdf2"/><rect x="852.5" y="342" width="3.2" height="6" fill="#fff"/><rect x="853.5" y="343" width="1.2" height="4" fill="#8ccdf2"/><rect x="865.0" y="342" width="3.2" height="6" fill="#fff"/><rect x="866.0" y="343" width="1.2" height="4" fill="#8ccdf2"/><rect x="901.0" y="342" width="3.2" height="6" fill="#fff"/><rect x="902.0" y="343" width="1.2" height="4" fill="#8ccdf2"/><rect x="903.5" y="342" width="3.2" height="6" fill="#fff"/><rect x="904.5" y="343" width="1.2" height="4" fill="#8ccdf2"/><rect x="906.0" y="342" width="3.2" height="6" fill="#fff"/><rect x="907.0" y="343" width="1.2" height="4" fill="#8ccdf2"/><rect x="908.0" y="342" width="4.5" height="6" fill="#fff"/><rect x="909.0" y="343" width="2.5" height="4" fill="#0f93e3"/><rect x="997.5" y="342" width="3.0" height="6" fill="#fff"/><rect x="998.5" y="343" width="1.0" height="4" fill="#8e8e8e"/><rect x="1000.8" y="342" width="133.9" height="6" fill="#fff"/><rect x="1001.8" y="343" width="131.9" height="4" fill="#00a846"/><rect x="1134.5" y="342" width="3.2" height="6" fill="#fff"/><rect x="1135.5" y="343" width="1.2" height="4" fill="#8ccdf2"/><rect x="577.5" y="348" width="7.5" height="6" fill="#fff"/><rect x="578.5" y="349" width="5.5" height="4" fill="#00a846"/><rect x="585.0" y="348" width="3.2" height="6" fill="#fff"/><rect x="586.0" y="349" width="1.2" height="4" fill="#8ccdf2"/><rect x="680.0" y="348" width="3.2" height="6" fill="#fff"/><rect x="681.0" y="349" width="1.2" height="4" fill="#00a846"/><rect x="682.5" y="348" width="3.2" height="6" fill="#fff"/><rect x="683.5" y="349" width="1.2" height="4" fill="#00a846"/><rect x="684.0" y="348" width="3.2" height="6" fill="#fff"/><rect x="685.0" y="349" width="1.2" height="4" fill="#8ccdf2"/><rect x="688.0" y="348" width="3.2" height="6" fill="#fff"/><rect x="689.0" y="349" width="1.2" height="4" fill="#8ccdf2"/><rect x="691.0" y="348" width="3.2" height="6" fill="#fff"/><rect x="692.0" y="349" width="1.2" height="4" fill="#8ccdf2"/><rect x="697.5" y="348" width="3.2" height="6" fill="#fff"/><rect x="698.5" y="349" width="1.2" height="4" fill="#8ccdf2"/><rect x="700.5" y="348" width="3.2" height="6" fill="#fff"/><rect x="701.5" y="349" width="1.2" height="4" fill="#8ccdf2"/><rect x="703.5" y="348" width="3.2" height="6" fill="#fff"/><rect x="704.5" y="349" width="1.2" height="4" fill="#8ccdf2"/><rect x="748.5" y="348" width="3.2" height="6" fill="#fff"/><rect x="749.5" y="349" width="1.2" height="4" fill="#00a846"/><rect x="751.0" y="348" width="3.2" height="6" fill="#fff"/><rect x="752.0" y="349" width="1.2" height="4" fill="#8ccdf2"/><rect x="769.0" y="348" width="3.2" height="6" fill="#fff"/><rect x="770.0" y="349" width="1.2" height="4" fill="#8ccdf2"/><rect x="775.5" y="348" width="3.2" height="6" fill="#fff"/><rect x="776.5" y="349" width="1.2" height="4" fill="#8ccdf2"/><rect x="778.5" y="348" width="3.2" height="6" fill="#fff"/><rect x="779.5" y="349" width="1.2" height="4" fill="#8ccdf2"/><rect x="781.5" y="348" width="3.2" height="6" fill="#fff"/><rect x="782.5" y="349" width="1.2" height="4" fill="#8ccdf2"/><rect x="785.5" y="348" width="3.2" height="6" fill="#fff"/><rect x="786.5" y="349" width="1.2" height="4" fill="#8ccdf2"/><rect x="793.0" y="348" width="3.2" height="6" fill="#fff"/><rect x="794.0" y="349" width="1.2" height="4" fill="#8ccdf2"/><rect x="772.5" y="348" width="4.0" height="6" fill="#fff"/><rect x="773.5" y="349" width="2.0" height="4" fill="#00a846"/><rect x="788.0" y="348" width="5.0" height="6" fill="#fff"/><rect x="789.0" y="349" width="3.0" height="4" fill="#00a846"/><rect x="804.0" y="348" width="3.2" height="6" fill="#fff"/><rect x="805.0" y="349" width="1.2" height="4" fill="#00a846"/><rect x="807.0" y="348" width="3.2" height="6" fill="#fff"/><rect x="808.0" y="349" width="1.2" height="4" fill="#00a846"/><rect x="809.0" y="348" width="5.0" height="6" fill="#fff"/><rect x="810.0" y="349" width="3.0" height="4" fill="#00a846"/><rect x="814.0" y="348" width="3.2" height="6" fill="#fff"/><rect x="815.0" y="349" width="1.2" height="4" fill="#8ccdf2"/><rect x="821.0" y="348" width="5.0" height="6" fill="#fff"/><rect x="822.0" y="349" width="3.0" height="4" fill="#00a846"/><rect x="826.0" y="348" width="3.2" height="6" fill="#fff"/><rect x="827.0" y="349" width="1.2" height="4" fill="#8ccdf2"/><rect x="841.5" y="348" width="3.2" height="6" fill="#fff"/><rect x="842.5" y="349" width="1.2" height="4" fill="#8ccdf2"/><rect x="848.0" y="348" width="3.2" height="6" fill="#fff"/><rect x="849.0" y="349" width="1.2" height="4" fill="#8ccdf2"/><rect x="850.5" y="348" width="3.2" height="6" fill="#fff"/><rect x="851.5" y="349" width="1.2" height="4" fill="#8ccdf2"/><rect x="853.0" y="348" width="3.2" height="6" fill="#fff"/><rect x="854.0" y="349" width="1.2" height="4" fill="#8ccdf2"/><rect x="875.0" y="348" width="15.5" height="6" fill="#fff"/><rect x="876.0" y="349" width="13.5" height="4" fill="#00a846"/><rect x="891.0" y="348" width="3.2" height="6" fill="#fff"/><rect x="892.0" y="349" width="1.2" height="4" fill="#8ccdf2"/><rect x="901.0" y="348" width="3.2" height="6" fill="#fff"/><rect x="902.0" y="349" width="1.2" height="4" fill="#8ccdf2"/><rect x="903.5" y="348" width="3.2" height="6" fill="#fff"/><rect x="904.5" y="349" width="1.2" height="4" fill="#8ccdf2"/><rect x="906.0" y="348" width="3.2" height="6" fill="#fff"/><rect x="907.0" y="349" width="1.2" height="4" fill="#8ccdf2"/><rect x="908.0" y="348" width="4.5" height="6" fill="#fff"/><rect x="909.0" y="349" width="2.5" height="4" fill="#0f93e3"/><rect x="944.0" y="348" width="3.2" height="6" fill="#fff"/><rect x="945.0" y="349" width="1.2" height="4" fill="#8ccdf2"/><rect x="945.5" y="348" width="3.2" height="6" fill="#fff"/><rect x="946.5" y="349" width="1.2" height="4" fill="#8ccdf2"/><rect x="964.5" y="348" width="3.2" height="6" fill="#fff"/><rect x="965.5" y="349" width="1.2" height="4" fill="#8ccdf2"/><rect x="973.5" y="348" width="3.2" height="6" fill="#fff"/><rect x="974.5" y="349" width="1.2" height="4" fill="#8ccdf2"/><rect x="997.5" y="348" width="3.0" height="6" fill="#fff"/><rect x="998.5" y="349" width="1.0" height="4" fill="#8e8e8e"/><rect x="1000.8" y="348" width="148.5" height="6" fill="#fff"/><rect x="1001.8" y="349" width="146.5" height="4" fill="#00a846"/><rect x="1149.5" y="348" width="3.2" height="6" fill="#fff"/><rect x="1150.5" y="349" width="1.2" height="4" fill="#8ccdf2"/><rect x="577.5" y="354" width="7.5" height="6" fill="#fff"/><rect x="578.5" y="355" width="5.5" height="4" fill="#00a846"/><rect x="586.0" y="354" width="3.2" height="6" fill="#fff"/><rect x="587.0" y="355" width="1.2" height="4" fill="#8ccdf2"/><rect x="616.0" y="354" width="3.2" height="6" fill="#fff"/><rect x="617.0" y="355" width="1.2" height="4" fill="#8ccdf2"/><rect x="627.0" y="354" width="6.5" height="6" fill="#fff"/><rect x="628.0" y="355" width="4.5" height="4" fill="#00a846"/><rect x="633.5" y="354" width="3.2" height="6" fill="#fff"/><rect x="634.5" y="355" width="1.2" height="4" fill="#8ccdf2"/><rect x="643.5" y="354" width="3.2" height="6" fill="#fff"/><rect x="644.5" y="355" width="1.2" height="4" fill="#8ccdf2"/><rect x="667.0" y="354" width="3.2" height="6" fill="#fff"/><rect x="668.0" y="355" width="1.2" height="4" fill="#8ccdf2"/><rect x="901.0" y="354" width="3.2" height="6" fill="#fff"/><rect x="902.0" y="355" width="1.2" height="4" fill="#8ccdf2"/><rect x="903.5" y="354" width="3.2" height="6" fill="#fff"/><rect x="904.5" y="355" width="1.2" height="4" fill="#8ccdf2"/><rect x="906.0" y="354" width="3.2" height="6" fill="#fff"/><rect x="907.0" y="355" width="1.2" height="4" fill="#8ccdf2"/><rect x="908.5" y="354" width="4.5" height="6" fill="#fff"/><rect x="909.5" y="355" width="2.5" height="4" fill="#0f93e3"/><rect x="913.0" y="354" width="5.5" height="6" fill="#fff"/><rect x="914.0" y="355" width="3.5" height="4" fill="#00a846"/><rect x="918.5" y="354" width="3.2" height="6" fill="#fff"/><rect x="919.5" y="355" width="1.2" height="4" fill="#8ccdf2"/><rect x="997.5" y="354" width="3.0" height="6" fill="#fff"/><rect x="998.5" y="355" width="1.0" height="4" fill="#8e8e8e"/><rect x="1000.8" y="354" width="150.8" height="6" fill="#fff"/><rect x="1001.8" y="355" width="148.8" height="4" fill="#00a846"/><rect x="1151.5" y="354" width="5.5" height="6" fill="#fff"/><rect x="1152.5" y="355" width="3.5" height="4" fill="#0f93e3"/><rect x="925.0" y="360" width="14.5" height="6" fill="#fff"/><rect x="926.0" y="361" width="12.5" height="4" fill="#00a846"/><rect x="939.0" y="360" width="4.5" height="6" fill="#fff"/><rect x="940.0" y="361" width="2.5" height="4" fill="#0f93e3"/><rect x="1022.0" y="360" width="68.0" height="6" fill="#fff"/><rect x="1023.0" y="361" width="66.0" height="4" fill="#00a846"/><rect x="1090.0" y="360" width="63.0" height="6" fill="#fff"/><rect x="1091.0" y="361" width="61.0" height="4" fill="#0f93e3"/></svg>
<div class="r" style="left:110px;top:302px;width:2px;height:120px;background:#0a0a9c;"></div>
<div class="r" style="left:216px;top:302px;width:2px;height:120px;background:#c80000;"></div>
<div class="r" style="left:0px;top:262px;width:4px;height:37px;background:#8a8a8a;"></div>
<div class="r" style="left:1632px;top:262px;width:4px;height:37px;background:#8a8a8a;"></div>
<div class="r" style="left:0px;top:300px;width:2px;height:122px;background:#c6cae8;"></div>
<div class="r" style="left:1634px;top:300px;width:2px;height:122px;background:#d5dcf5;"></div>
<div class="r" style="left:0;top:262px;width:1632px;height:40px;overflow:hidden;">
<span id="t32" class="t " style="top:9.92px;color:#303942;font-size:19px;line-height:19px;letter-spacing:0.106px;left:139.15px;">200 ms</span>
<span id="t33" class="t " style="top:9.92px;color:#303942;font-size:19px;line-height:19px;letter-spacing:0.029px;left:347.54px;">400 ms</span>
<span id="t34" class="t " style="top:9.92px;color:#303942;font-size:19px;line-height:19px;letter-spacing:0.175px;left:554.81px;">600 ms</span>
<span id="t35" class="t " style="top:9.92px;color:#303942;font-size:19px;line-height:19px;letter-spacing:0.098px;left:761.20px;">800 ms</span>
<span id="t36" class="t " style="top:9.92px;color:#303942;font-size:19px;line-height:19px;letter-spacing:0.086px;left:958.56px;">1000 ms</span>
<span id="t37" class="t " style="top:9.92px;color:#303942;font-size:19px;line-height:19px;letter-spacing:0.086px;left:1166.56px;">1200 ms</span>
<span id="t38" class="t " style="top:9.92px;color:#303942;font-size:19px;line-height:19px;letter-spacing:0.086px;left:1372.56px;">1400 ms</span>
<span id="t39" class="t " style="top:9.92px;color:#303942;font-size:19px;line-height:19px;letter-spacing:0.086px;left:1580.56px;">1600 ms</span>
</div>
<div class="r" style="left:588px;top:262px;width:4px;height:160px;background:#1a4db8;"></div>
<div class="r" style="left:0px;top:426px;width:1636px;height:52px;background:#f1f3f4;"></div>
<div class="r" style="left:0px;top:478px;width:1636px;height:2px;background:#cbcdd1;"></div>
<span id="t40" class="t " style="top:440.68px;color:#303942;left:10.13px;">Name</span>
<span id="t41" class="t " style="top:440.68px;color:#303942;letter-spacing:0.680px;left:463.13px;">Method</span>
<span id="t42" class="t " style="top:440.68px;color:#303942;letter-spacing:0.120px;left:594.29px;">Status</span>
<span id="t43" class="t " style="top:440.68px;color:#303942;letter-spacing:-0.467px;left:725.39px;">Type</span>
<span id="t44" class="t " style="top:440.68px;color:#303942;letter-spacing:0.188px;left:855.92px;">Initiator</span>
<span id="t45" class="t " style="top:440.68px;color:#303942;letter-spacing:-0.500px;left:1076.89px;">Size</span>
<span id="t46" class="t " style="top:440.68px;color:#303942;left:1211.89px;">Time</span>
<span id="t47" class="t " style="top:440.68px;color:#303942;letter-spacing:-0.100px;left:1326.40px;">Waterfall</span>
<svg style="left:1598px;top:444px" width="16" height="14" viewBox="0 0 16 14"><path d="M8 0.200L15.800 13.800H0.200Z" fill="#6e6e6e"/></svg>
<div class="r" style="left:0px;top:480px;width:1636px;height:554px;background:#fff;"></div>
<div class="r" style="left:0px;top:480px;width:1604px;height:42px;background:#f5f5f5;"></div>
<svg style="left:18px;top:489px" width="20" height="24" viewBox="0 0 20 24"><rect x="1" y="1" width="18" height="22" rx="2" fill="#fff" stroke="#1c6ff5" stroke-width="2"/><path d="M4 9H16M4 13H16M4 17H16" stroke="#1c6ff5" stroke-width="2"/></svg>
<span id="t48" class="t " style="top:489.68px;color:#303942;letter-spacing:-0.344px;left:51.80px;">ZN_BASE_2/</span>
<span id="t49" class="t " style="top:489.68px;color:#303942;letter-spacing:-1.350px;left:463.39px;">GET</span>
<span id="t50" class="t " style="top:489.68px;color:#303942;letter-spacing:0.250px;left:593.92px;">200</span>
<span id="t51" class="t " style="top:489.68px;color:#303942;letter-spacing:0.286px;left:725.48px;">document</span>
<span id="t52" class="t " style="top:489.68px;color:#60646b;left:856.02px;">Other</span>
<span id="t53" class="t " style="top:489.68px;color:#303942;left:1125.48px;">1.6 kB</span>
<span id="t54" class="t " style="top:489.68px;color:#303942;left:1255.71px;">7 ms</span>
<svg style="left:18px;top:531px" width="20" height="24" viewBox="0 0 20 24"><rect x="1" y="1" width="18" height="22" rx="2" fill="none" stroke="#f3b300" stroke-width="2"/><path d="M8.900 11.700L5.900 15L8.900 18.300M11.100 11.700L14.100 15L11.100 18.300" fill="none" stroke="#f3b300" stroke-width="2.300"/></svg>
<span id="t55" class="t " style="top:531.68px;color:#303942;letter-spacing:0.300px;left:51.65px;">sap-ui-core.js</span>
<span id="t56" class="t " style="top:531.68px;color:#303942;letter-spacing:-1.350px;left:463.39px;">GET</span>
<span id="t57" class="t " style="top:531.68px;color:#303942;letter-spacing:0.250px;left:593.92px;">200</span>
<span id="t58" class="t " style="top:531.68px;color:#303942;letter-spacing:0.280px;left:725.85px;">script</span>
<span id="t59" class="t " style="top:531.68px;color:#303942;letter-spacing:-0.350px;left:855.79px;"><span style="text-decoration:underline;text-decoration-thickness:1.5px;text-underline-offset:2.5px;text-decoration-skip-ink:none;">(index)</span></span>
<span id="t60" class="t " style="top:531.68px;color:#303942;left:1118.66px;">778 kB</span>
<span id="t61" class="t " style="top:531.68px;color:#303942;left:1242.53px;">15 ms</span>
<div class="r" style="left:0px;top:564px;width:1604px;height:42px;background:#f5f5f5;"></div>
<svg style="left:18px;top:573px" width="20" height="24" viewBox="0 0 20 24"><rect x="1" y="1" width="18" height="22" rx="2" fill="none" stroke="#f3b300" stroke-width="2"/><path d="M8.900 11.700L5.900 15L8.900 18.300M11.100 11.700L14.100 15L11.100 18.300" fill="none" stroke="#f3b300" stroke-width="2.300"/></svg>
<span id="t62" class="t " style="top:573.68px;color:#303942;letter-spacing:-0.027px;left:50.92px;">livereload.js?snipver=1</span>
<span id="t63" class="t " style="top:573.68px;color:#303942;letter-spacing:-1.350px;left:463.39px;">GET</span>
<span id="t64" class="t " style="top:573.68px;color:#303942;letter-spacing:0.250px;left:593.92px;">200</span>
<span id="t65" class="t " style="top:573.68px;color:#303942;letter-spacing:0.280px;left:725.85px;">script</span>
<span id="t66" class="t " style="top:573.68px;color:#303942;letter-spacing:-0.350px;left:855.79px;"><span style="text-decoration:underline;text-decoration-thickness:1.5px;text-underline-offset:2.5px;text-decoration-skip-ink:none;">(index)</span></span>
<span id="t67" class="t " style="top:573.68px;color:#303942;left:1118.66px;">138 kB</span>
<span id="t68" class="t " style="top:573.68px;color:#303942;left:1255.71px;">6 ms</span>
<svg style="left:18px;top:615px" width="20" height="24" viewBox="0 0 20 24"><rect x="1" y="1" width="18" height="22" rx="2" fill="none" stroke="#f3b300" stroke-width="2"/><path d="M8.900 11.700L5.900 15L8.900 18.300M11.100 11.700L14.100 15L11.100 18.300" fill="none" stroke="#f3b300" stroke-width="2.300"/></svg>
<span id="t69" class="t " style="top:615.68px;color:#303942;letter-spacing:0.229px;left:50.92px;">library-preload.js</span>
<span id="t70" class="t " style="top:615.68px;color:#303942;letter-spacing:-1.350px;left:463.39px;">GET</span>
<span id="t71" class="t " style="top:615.68px;color:#303942;letter-spacing:0.250px;left:593.92px;">200</span>
<span id="t72" class="t " style="top:615.68px;color:#303942;letter-spacing:0.280px;left:725.85px;">script</span>
<span id="t73" class="t " style="top:615.68px;color:#303942;letter-spacing:0.119px;left:855.78px;"><span style="text-decoration:underline;text-decoration-thickness:1.5px;text-underline-offset:2.5px;text-decoration-skip-ink:none;">ui5loader-dbg.js</span>…</span>
<span id="t74" class="t " style="top:615.68px;color:#303942;left:1117.48px;">1.7 MB</span>
<span id="t75" class="t " style="top:615.68px;color:#303942;left:1242.53px;">13 ms</span>
<div class="r" style="left:0px;top:648px;width:1604px;height:42px;background:#f5f5f5;"></div>
<svg style="left:18px;top:657px" width="20" height="24" viewBox="0 0 20 24"><rect x="1" y="1" width="18" height="22" rx="2" fill="none" stroke="#f3b300" stroke-width="2"/><path d="M8.900 11.700L5.900 15L8.900 18.300M11.100 11.700L14.100 15L11.100 18.300" fill="none" stroke="#f3b300" stroke-width="2.300"/></svg>
<span id="t76" class="t " style="top:657.68px;color:#303942;letter-spacing:0.229px;left:50.92px;">library-preload.js</span>
<span id="t77" class="t " style="top:657.68px;color:#303942;letter-spacing:-1.350px;left:463.39px;">GET</span>
<span id="t78" class="t " style="top:657.68px;color:#303942;letter-spacing:0.250px;left:593.92px;">200</span>
<span id="t79" class="t " style="top:657.68px;color:#303942;letter-spacing:0.280px;left:725.85px;">script</span>
<span id="t80" class="t " style="top:657.68px;color:#303942;letter-spacing:0.119px;left:855.78px;"><span style="text-decoration:underline;text-decoration-thickness:1.5px;text-underline-offset:2.5px;text-decoration-skip-ink:none;">ui5loader-dbg.js</span>…</span>
<span id="t81" class="t " style="top:657.68px;color:#303942;left:1117.48px;">2.3 MB</span>
<span id="t82" class="t " style="top:657.68px;color:#303942;left:1242.53px;">28 ms</span>
<svg style="left:18px;top:699px" width="20" height="24" viewBox="0 0 20 24"><rect x="1" y="1" width="18" height="22" rx="2" fill="none" stroke="#6e7175" stroke-width="2"/></svg>
<span id="t83" class="t " style="top:699.68px;color:#303942;letter-spacing:0.094px;left:51.80px;">AppCacheBuster.js</span>
<span id="t84" class="t " style="top:699.68px;color:#303942;letter-spacing:-1.350px;left:463.39px;">GET</span>
<span id="t85" class="t " style="top:699.68px;color:#303942;letter-spacing:0.250px;left:593.92px;">200</span>
<span id="t86" class="t " style="top:699.68px;color:#303942;letter-spacing:-0.050px;left:726.05px;">xhr</span>
<span id="t87" class="t " style="top:699.68px;color:#303942;letter-spacing:0.119px;left:855.78px;"><span style="text-decoration:underline;text-decoration-thickness:1.5px;text-underline-offset:2.5px;text-decoration-skip-ink:none;">ui5loader-dbg.js</span>…</span>
<span id="t88" class="t " style="top:699.68px;color:#303942;left:1125.48px;">5.9 kB</span>
<span id="t89" class="t " style="top:699.68px;color:#303942;left:1255.71px;">5 ms</span>
<div class="r" style="left:0px;top:732px;width:1604px;height:42px;background:#f5f5f5;"></div>
<svg style="left:18px;top:741px" width="20" height="24" viewBox="0 0 20 24"><rect x="1" y="1" width="18" height="22" rx="2" fill="none" stroke="#6e7175" stroke-width="2"/></svg>
<span id="t90" class="t " style="top:741.68px;color:#303942;letter-spacing:0.280px;left:50.22px;">IconPool.js</span>
<span id="t91" class="t " style="top:741.68px;color:#303942;letter-spacing:-1.350px;left:463.39px;">GET</span>
<span id="t92" class="t " style="top:741.68px;color:#303942;letter-spacing:0.250px;left:593.92px;">200</span>
<span id="t93" class="t " style="top:741.68px;color:#303942;letter-spacing:-0.050px;left:726.05px;">xhr</span>
<span id="t94" class="t " style="top:741.68px;color:#303942;letter-spacing:0.119px;left:855.78px;"><span style="text-decoration:underline;text-decoration-thickness:1.5px;text-underline-offset:2.5px;text-decoration-skip-ink:none;">ui5loader-dbg.js</span>…</span>
<span id="t95" class="t " style="top:741.68px;color:#303942;left:1111.83px;">23.6 kB</span>
<span id="t96" class="t " style="top:741.68px;color:#303942;left:1255.71px;">3 ms</span>
<svg style="left:18px;top:783px" width="20" height="24" viewBox="0 0 20 24"><rect x="1" y="1" width="18" height="22" rx="2" fill="none" stroke="#eb4132" stroke-width="2"/></svg>
<span id="t97" class="t " style="top:783.68px;color:#eb4132;letter-spacing:0.253px;left:51.65px;">sap-ui-cachebuster-info.json?sap…</span>
<span id="t98" class="t " style="top:783.68px;color:#eb4132;letter-spacing:-1.350px;left:463.39px;">GET</span>
<span id="t99" class="t " style="top:783.68px;color:#eb4132;letter-spacing:0.250px;left:594.69px;">404</span>
<span id="t100" class="t " style="top:783.68px;color:#eb4132;letter-spacing:-0.050px;left:726.05px;">xhr</span>
<span id="t101" class="t " style="top:783.68px;color:#eb4132;letter-spacing:0.206px;left:856.70px;"><span style="text-decoration:underline;text-decoration-thickness:1.5px;text-underline-offset:2.5px;text-decoration-skip-ink:none;">jquery-dbg.js:9269</span></span>
<span id="t102" class="t " style="top:783.68px;color:#eb4132;left:1130.66px;">426 B</span>
<span id="t103" class="t " style="top:783.68px;color:#eb4132;left:1255.71px;">4 ms</span>
<div class="r" style="left:0px;top:816px;width:1604px;height:42px;background:#f5f5f5;"></div>
<svg style="left:18px;top:825px" width="20" height="24" viewBox="0 0 20 24"><rect x="1" y="1" width="18" height="22" rx="2" fill="none" stroke="#6e7175" stroke-width="2"/></svg>
<span id="t104" class="t " style="top:825.68px;color:#303942;letter-spacing:0.089px;left:50.92px;">livereload</span>
<span id="t105" class="t " style="top:825.68px;color:#303942;letter-spacing:-1.350px;left:463.39px;">GET</span>
<span id="t106" class="t " style="top:825.68px;color:#303942;letter-spacing:0.250px;left:593.47px;">101</span>
<span id="t107" class="t " style="top:825.68px;color:#303942;letter-spacing:0.317px;left:726.38px;">websoc…</span>
<span id="t108" class="t " style="top:825.68px;color:#303942;left:855.72px;"><span style="text-decoration:underline;text-decoration-thickness:1.5px;text-underline-offset:2.5px;text-decoration-skip-ink:none;">livereload.js?sni</span>…</span>
<span id="t109" class="t " style="top:825.68px;color:#303942;left:1157.48px;">0 B</span>
<span id="t110" class="t " style="top:825.68px;color:#63676d;letter-spacing:0.200px;left:1219.15px;">Pending</span>
<svg style="left:18px;top:867px" width="20" height="24" viewBox="0 0 20 24"><rect x="1" y="1" width="18" height="22" rx="2" fill="none" stroke="#f3b300" stroke-width="2"/><path d="M8.900 11.700L5.900 15L8.900 18.300M11.100 11.700L14.100 15L11.100 18.300" fill="none" stroke="#f3b300" stroke-width="2.300"/></svg>
<span id="t111" class="t " style="top:867.68px;color:#303942;letter-spacing:0.160px;left:51.28px;">executor.js</span>
<span id="t112" class="t " style="top:867.68px;color:#303942;letter-spacing:-1.350px;left:463.39px;">GET</span>
<span id="t113" class="t " style="top:867.68px;color:#303942;letter-spacing:0.250px;left:593.92px;">200</span>
<span id="t114" class="t " style="top:867.68px;color:#303942;letter-spacing:0.280px;left:725.85px;">script</span>
<span id="t115" class="t " style="top:867.68px;color:#303942;letter-spacing:0.258px;left:856.08px;"><span style="text-decoration:underline;text-decoration-thickness:1.5px;text-underline-offset:2.5px;text-decoration-skip-ink:none;">content.js:59</span></span>
<span id="t116" class="t " style="top:867.68px;color:#303942;left:1125.48px;">1.2 kB</span>
<span id="t117" class="t " style="top:867.68px;color:#303942;left:1255.71px;">3 ms</span>
<div class="r" style="left:0px;top:900px;width:1604px;height:42px;background:#f5f5f5;"></div>
<svg style="left:18px;top:909px" width="20" height="24" viewBox="0 0 20 24"><rect x="1" y="1" width="18" height="22" rx="2" fill="none" stroke="#eb4132" stroke-width="2"/></svg>
<span id="t118" class="t " style="top:909.68px;color:#eb4132;letter-spacing:-0.069px;left:50.94px;">messagebundle_es_ES.properties</span>
<span id="t119" class="t " style="top:909.68px;color:#eb4132;letter-spacing:-1.350px;left:463.39px;">GET</span>
<span id="t120" class="t " style="top:909.68px;color:#eb4132;letter-spacing:0.250px;left:594.69px;">404</span>
<span id="t121" class="t " style="top:909.68px;color:#eb4132;letter-spacing:-0.050px;left:726.05px;">xhr</span>
<span id="t122" class="t " style="top:909.68px;color:#eb4132;letter-spacing:0.206px;left:856.70px;"><span style="text-decoration:underline;text-decoration-thickness:1.5px;text-underline-offset:2.5px;text-decoration-skip-ink:none;">jquery-dbg.js:9269</span></span>
<span id="t123" class="t " style="top:909.68px;color:#eb4132;left:1130.66px;">450 B</span>
<span id="t124" class="t " style="top:909.68px;color:#eb4132;left:1255.71px;">4 ms</span>
<svg style="left:18px;top:951px" width="20" height="24" viewBox="0 0 20 24"><rect x="1" y="1" width="18" height="22" rx="2" fill="none" stroke="#eb4132" stroke-width="2"/></svg>
<span id="t125" class="t " style="top:951.68px;color:#eb4132;letter-spacing:-0.069px;left:50.94px;">messagebundle_es_ES.properties</span>
<span id="t126" class="t " style="top:951.68px;color:#eb4132;letter-spacing:-1.350px;left:463.39px;">GET</span>
<span id="t127" class="t " style="top:951.68px;color:#eb4132;letter-spacing:0.250px;left:594.69px;">404</span>
<span id="t128" class="t " style="top:951.68px;color:#eb4132;letter-spacing:-0.050px;left:726.05px;">xhr</span>
<span id="t129" class="t " style="top:951.68px;color:#eb4132;letter-spacing:0.206px;left:856.70px;"><span style="text-decoration:underline;text-decoration-thickness:1.5px;text-underline-offset:2.5px;text-decoration-skip-ink:none;">jquery-dbg.js:9269</span></span>
<span id="t130" class="t " style="top:951.68px;color:#eb4132;left:1130.66px;">444 B</span>
<span id="t131" class="t " style="top:951.68px;color:#eb4132;left:1255.71px;">3 ms</span>
<div class="r" style="left:0px;top:984px;width:1604px;height:42px;background:#f5f5f5;"></div>
<svg style="left:18px;top:993px" width="20" height="24" viewBox="0 0 20 24"><rect x="1" y="1" width="18" height="22" rx="2" fill="none" stroke="#6e7175" stroke-width="2"/></svg>
<span id="t132" class="t " style="top:993.68px;color:#303942;letter-spacing:0.050px;left:50.94px;">messagebundle_es.properties</span>
<span id="t133" class="t " style="top:993.68px;color:#303942;letter-spacing:-1.350px;left:463.39px;">GET</span>
<span id="t134" class="t " style="top:993.68px;color:#303942;letter-spacing:0.250px;left:593.92px;">200</span>
<span id="t135" class="t " style="top:993.68px;color:#303942;letter-spacing:-0.050px;left:726.05px;">xhr</span>
<span id="t136" class="t " style="top:993.68px;color:#303942;letter-spacing:0.206px;left:856.70px;"><span style="text-decoration:underline;text-decoration-thickness:1.5px;text-underline-offset:2.5px;text-decoration-skip-ink:none;">jquery-dbg.js:9269</span></span>
<span id="t137" class="t " style="top:993.68px;color:#303942;left:1111.83px;">18.7 kB</span>
<span id="t138" class="t " style="top:993.68px;color:#303942;left:1255.71px;">3 ms</span>
<div class="r" style="left:454px;top:424px;width:2px;height:610px;background:#cbcdd1;"></div>
<div class="r" style="left:584px;top:424px;width:2px;height:610px;background:#cbcdd1;"></div>
<div class="r" style="left:715px;top:424px;width:2px;height:610px;background:#cbcdd1;"></div>
<div class="r" style="left:846px;top:424px;width:2px;height:610px;background:#cbcdd1;"></div>
<div class="r" style="left:1067px;top:424px;width:2px;height:610px;background:#cbcdd1;"></div>
<div class="r" style="left:1202px;top:424px;width:2px;height:610px;background:#cbcdd1;"></div>
<div class="r" style="left:1316px;top:424px;width:2px;height:610px;background:#cbcdd1;"></div>
<div class="r" style="left:1318px;top:480px;width:2px;height:552px;background:#e4e4e4;"></div>
<div class="r" style="left:1506px;top:480px;width:2px;height:552px;background:#e0e0e0;"></div>
<div class="r" style="left:1604px;top:480px;width:30px;height:552px;background:#fafafa;"></div>
<div class="r" style="left:1604px;top:480px;width:2px;height:552px;background:#e6e6e6;"></div>
<div class="r" style="left:1612px;top:486px;width:16px;height:39px;border-radius:8px;background:#c0c0c0;"></div>
<div class="r" style="left:1326px;top:496.0px;width:4px;height:10px;background:#d5d5d5;"></div>
<div class="r" style="left:1332px;top:490.0px;width:4px;height:22px;background:#0ea5ef;"></div>
<div class="r" style="left:1328px;top:538.0px;width:4px;height:10px;background:#d5d5d5;"></div>
<div class="r" style="left:1334px;top:530.0px;width:2px;height:26px;background:#00a846;"></div>
<div class="r" style="left:1336px;top:530.0px;width:6px;height:26px;background:#0ea5ef;"></div>
<div class="r" style="left:1328px;top:580.0px;width:4px;height:10px;background:#d5d5d5;"></div>
<div class="r" style="left:1332px;top:578.5px;width:2px;height:13px;background:#8e8e8e;"></div>
<div class="r" style="left:1340px;top:574.0px;width:4px;height:22px;background:#0ea5ef;"></div>
<div class="r" style="left:1340px;top:622.0px;width:4px;height:10px;background:#d5d5d5;"></div>
<div class="r" style="left:1346px;top:614.0px;width:6px;height:26px;background:#0ea5ef;"></div>
<div class="r" style="left:1340px;top:664.0px;width:4px;height:10px;background:#d5d5d5;"></div>
<div class="r" style="left:1346px;top:656.0px;width:8px;height:26px;background:#0ea5ef;"></div>
<div class="r" style="left:1340px;top:706.0px;width:4px;height:10px;background:#d5d5d5;"></div>
<div class="r" style="left:1346px;top:700.0px;width:4px;height:22px;background:#0ea5ef;"></div>
<div class="r" style="left:1340px;top:748.0px;width:4px;height:10px;background:#d5d5d5;"></div>
<div class="r" style="left:1346px;top:740.0px;width:2px;height:26px;background:#00a846;"></div>
<div class="r" style="left:1348px;top:742.0px;width:4px;height:22px;background:#0ea5ef;"></div>
<div class="r" style="left:1342px;top:790.0px;width:4px;height:10px;background:#d5d5d5;"></div>
<div class="r" style="left:1348px;top:784.0px;width:4px;height:22px;background:#0ea5ef;"></div>
<div class="r" style="left:1347px;top:830.0px;width:14.5px;height:14px;background:#8e8e8e;"></div>
<div class="r" style="left:1354px;top:868.0px;width:4px;height:22px;background:#0ea5ef;"></div>
<div class="r" style="left:1356px;top:916.0px;width:4px;height:10px;background:#d5d5d5;"></div>
<div class="r" style="left:1362px;top:910.0px;width:4px;height:22px;background:#0ea5ef;"></div>
<div class="r" style="left:1360px;top:958.0px;width:4px;height:10px;background:#d5d5d5;"></div>
<div class="r" style="left:1364px;top:958.0px;width:2px;height:10px;background:#b9b9b9;"></div>
<div class="r" style="left:1368px;top:952.0px;width:4px;height:22px;background:#0ea5ef;"></div>
<div class="r" style="left:1362px;top:1000.0px;width:4px;height:10px;background:#dedede;"></div>
<div class="r" style="left:1368px;top:994.0px;width:4px;height:22px;background:#0ea5ef;"></div>
<div class="r" style="left:1345px;top:480px;width:2px;height:552px;background:#1967d8;"></div>
<div class="r" style="left:1363px;top:480px;width:2px;height:552px;background:#b31412;"></div>
<div class="r" style="left:0px;top:1032px;width:1636px;height:2px;background:#cbcdd1;"></div>
<div class="r" style="left:0px;top:1034px;width:1636px;height:54px;background:#f1f3f4;"></div>
<span id="t139" class="t " style="top:1048.68px;color:#5f6368;letter-spacing:0.012px;left:22.47px;">141 requests</span>
<span id="t140" class="t " style="top:1048.68px;color:#5f6368;letter-spacing:0.085px;left:199.01px;">7.1 MB transferred</span>
<span id="t141" class="t " style="top:1048.68px;color:#5f6368;letter-spacing:0.037px;left:437.96px;">8.3 MB resources</span>
<span id="t142" class="t " style="top:1048.68px;color:#5f6368;letter-spacing:-0.017px;left:664.13px;">Finish: 1.51 s</span>
<span id="t143" class="t " style="top:1048.68px;color:#1a1aa6;letter-spacing:0.143px;left:844.13px;">DOMContentLoaded: 104 ms</span>
<span id="t144" class="t " style="top:1048.68px;color:#c80000;letter-spacing:0.056px;left:1198.63px;">Load: 206 ms</span>
<div class="r" style="left:179px;top:1044px;width:2px;height:32px;background:#cbcdd1;"></div>
<div class="r" style="left:418px;top:1044px;width:2px;height:32px;background:#cbcdd1;"></div>
<div class="r" style="left:645px;top:1044px;width:2px;height:32px;background:#cbcdd1;"></div>
<div class="r" style="left:824px;top:1044px;width:2px;height:32px;background:#cbcdd1;"></div>
<div class="r" style="left:1178px;top:1044px;width:2px;height:32px;background:#cbcdd1;"></div>
<div class="r" style="left:0px;top:422px;width:2px;height:666px;background:#c9ccd1;z-index:5;"></div>
<div class="r" style="left:1634px;top:422px;width:2px;height:666px;background:#c9ccd1;z-index:5;"></div>
<div class="r" style="left:0px;top:1086px;width:1636px;height:2px;background:#c9ccd1;z-index:5;"></div>
</div></body></html>
